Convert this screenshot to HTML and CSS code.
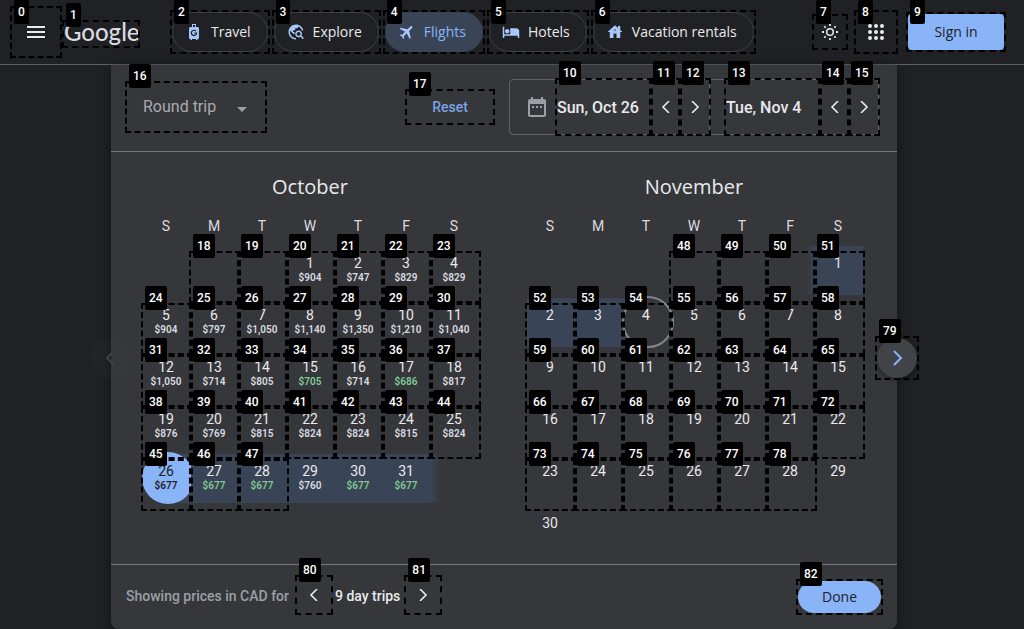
FILE: index.html
```html
<!DOCTYPE html>
<html lang="en">
<head>
<meta charset="utf-8">
<meta name="viewport" content="width=device-width, initial-scale=1">
<title>Google Flights</title>
<link rel="stylesheet" href="styles.css">
</head>
<body>
<header class="header">
  <div class="spot spot-menu">
    <button class="icon-button" aria-label="Main menu">
      <svg width="24" height="24" viewBox="0 0 24 24" fill="currentColor"><path d="M3 6h18v2H3zM3 11h18v2H3zM3 16h18v2H3z"/></svg>
    </button>
    <span class="mark"><span class="tag">0</span></span>
  </div>
  <div class="spot spot-logo">
    <a class="logo" href="#">Google</a>
    <span class="mark"><span class="tag">1</span></span>
  </div>
  <nav class="nav">
    <div class="spot spot-chip">
      <a class="chip" href="#"><svg class="chip-icon" viewBox="0 0 18 18"><path fill="currentColor" d="M7 1h4v3h1.500a1.500 1.500 0 0 1 1.500 1.500v9a1.500 1.500 0 0 1-1.500 1.500v1h-1.500v-1H7v1H5.500v-1A1.500 1.500 0 0 1 4 14.500v-9A1.500 1.500 0 0 1 5.500 4H7zm1 1v2h2V2z"/><path fill="none" stroke="#202124" stroke-width="1.200" d="M11 8.200A2.600 2.600 0 1 0 11.600 10H9.200"/></svg>Travel</a>
      <span class="mark"><span class="tag">2</span></span>
    </div>
    <div class="spot spot-chip">
      <a class="chip" href="#"><svg class="chip-icon" viewBox="0 0 24 24"><path fill="currentColor" d="M19.300 16.900c.4-.7.7-1.500.7-2.400 0-2.500-2-4.500-4.500-4.500S11 12 11 14.500s2 4.500 4.500 4.500c.9 0 1.700-.3 2.400-.7l3.200 3.200 1.400-1.400zm-3.800.1c-1.400 0-2.500-1.100-2.500-2.500s1.100-2.500 2.500-2.500 2.500 1.100 2.500 2.500-1.100 2.500-2.500 2.500zM12 20v2C6.480 22 2 17.520 2 12S6.480 2 12 2c4.840 0 8.870 3.440 9.800 8h-2.070c-.64-2.460-2.400-4.470-4.730-5.410V5c0 1.100-.9 2-2 2h-2v2c0 .55-.45 1-1 1H8v2h2v3H9l-4.790-4.790C4.080 10.790 4 11.380 4 12c0 4.410 3.590 8 8 8z"/></svg>Explore</a>
      <span class="mark"><span class="tag">3</span></span>
    </div>
    <div class="spot spot-chip">
      <a class="chip chip-active" href="#" aria-current="page"><svg class="chip-icon" viewBox="0 0 24 24"><path fill="currentColor" transform="rotate(45 12 12)" d="M21 16v-2l-8-5V3.500c0-.83-.67-1.500-1.500-1.500S10 2.670 10 3.500V9l-8 5v2l8-2.500V19l-2 1.500V22l3.500-1 3.500 1v-1.500L13 19v-5.500l8 2.500z"/></svg>Flights</a>
      <span class="mark"><span class="tag">4</span></span>
    </div>
    <div class="spot spot-chip">
      <a class="chip" href="#"><svg class="chip-icon" viewBox="0 0 24 24"><path fill="currentColor" d="M7 14c1.660 0 3-1.340 3-3S8.660 8 7 8s-3 1.340-3 3 1.340 3 3 3zm12-7h-8v8H3V5H1v15h2v-3h18v3h2v-9c0-2.210-1.790-4-4-4z"/></svg>Hotels</a>
      <span class="mark"><span class="tag">5</span></span>
    </div>
    <div class="spot spot-chip">
      <a class="chip" href="#"><svg class="chip-icon" viewBox="0 0 24 24"><path fill="currentColor" fill-rule="evenodd" d="M12 3l4 3.600V4h3v5.300l3 2.700h-3v8h-5v-6h-4v6H5v-8H2zm0 5.500a1.500 1.500 0 0 0-1.500 1.500h3a1.500 1.500 0 0 0-1.500-1.500z"/></svg>Vacation rentals</a>
      <span class="mark"><span class="tag">6</span></span>
    </div>
  </nav>
  <div class="actions">
    <div class="spot spot-theme">
      <button class="icon-button" aria-label="Change appearance">
        <svg width="18" height="18" viewBox="0 0 18 18" fill="none" stroke="currentColor" stroke-width="1.500"><circle cx="9" cy="9" r="3.300"/><path stroke-width="1.800" d="M9 1v2M9 15v2M1 9h2M15 9h2M3.300 3.300l1.400 1.400M13.300 13.300l1.400 1.400M3.300 14.700l1.400-1.400M13.300 4.700l1.400-1.400"/></svg>
      </button>
      <span class="mark"><span class="tag">7</span></span>
    </div>
    <div class="spot spot-apps">
      <button class="icon-button" aria-label="Google apps">
        <svg width="24" height="24" viewBox="0 0 24 24" fill="currentColor"><circle cx="6" cy="6" r="2"/><circle cx="12" cy="6" r="2"/><circle cx="18" cy="6" r="2"/><circle cx="6" cy="12" r="2"/><circle cx="12" cy="12" r="2"/><circle cx="18" cy="12" r="2"/><circle cx="6" cy="18" r="2"/><circle cx="12" cy="18" r="2"/><circle cx="18" cy="18" r="2"/></svg>
      </button>
      <span class="mark"><span class="tag">8</span></span>
    </div>
    <div class="spot spot-signin">
      <a class="signin" href="#">Sign in</a>
      <span class="mark"><span class="tag">9</span></span>
    </div>
  </div>
</header>

<main class="page">
  <section class="picker" aria-label="Choose dates">
    <div class="toolbar">
      <div class="spot trip">
        <select class="trip-select" aria-label="Trip type"><option>Round trip</option><option>One way</option></select>
        <svg class="trip-arrow" width="10" height="5" viewBox="0 0 10 5"><path fill="currentColor" d="M0 0h10L5 5z"/></svg>
        <span class="mark"><span class="tag">16</span></span>
      </div>
      <div class="toolbar-right">
        <div class="spot">
          <button class="reset">Reset</button>
          <span class="mark"><span class="tag">17</span></span>
        </div>
        <div class="dates">
          <svg class="dates-icon" width="18" height="20" viewBox="0 0 18 20"><rect x="1" y="3" width="16" height="16" rx="1" fill="none" stroke="currentColor" stroke-width="2"/><path fill="currentColor" d="M1 3h16v4H1zM3 0h2v3H3zM13 0h2v3h-2zM4 9h2v2H4zM8 9h2v2H8zM12 9h2v2h-2z"/></svg>
          <div class="date-group date-group-first">
            <div class="spot"><input class="date-input" type="text" value="Sun, Oct 26" aria-label="Departure"><span class="mark"><span class="tag">10</span></span></div>
            <div class="spot"><button class="step" aria-label="Earlier departure"><svg class="chevron" viewBox="0 0 12 12"><path d="M9 0L3 6l6 6"/></svg></button><span class="mark"><span class="tag">11</span></span></div>
            <div class="spot"><button class="step" aria-label="Later departure"><svg class="chevron" viewBox="0 0 12 12"><path d="M3 0l6 6-6 6"/></svg></button><span class="mark"><span class="tag">12</span></span></div>
          </div>
          <div class="date-group">
            <div class="spot"><input class="date-input" type="text" value="Tue, Nov 4" aria-label="Return"><span class="mark"><span class="tag">13</span></span></div>
            <div class="spot"><button class="step" aria-label="Earlier return"><svg class="chevron" viewBox="0 0 12 12"><path d="M9 0L3 6l6 6"/></svg></button><span class="mark"><span class="tag">14</span></span></div>
            <div class="spot"><button class="step" aria-label="Later return"><svg class="chevron" viewBox="0 0 12 12"><path d="M3 0l6 6-6 6"/></svg></button><span class="mark"><span class="tag">15</span></span></div>
          </div>
        </div>
      </div>
    </div>

    <div class="months" id="months"></div>

    <div class="footer">
      <span class="footer-note">Showing prices in CAD for</span>
      <div class="spot"><button class="length-step" aria-label="Shorter trip"><svg class="chevron" viewBox="0 0 12 12"><path d="M9 0L3 6l6 6"/></svg></button><span class="mark"><span class="tag">80</span></span></div>
      <span class="footer-length">9 day trips</span>
      <div class="spot"><button class="length-step" aria-label="Longer trip"><svg class="chevron" viewBox="0 0 12 12"><path d="M3 0l6 6-6 6"/></svg></button><span class="mark"><span class="tag">81</span></span></div>
      <div class="spot spot-done"><button class="done">Done</button><span class="mark"><span class="tag">82</span></span></div>
    </div>

    <button class="pager pager-prev" aria-label="Previous months" disabled><svg width="24" height="24" viewBox="0 0 24 24"><path d="M15 5l-7 7 7 7"/></svg></button>
    <div class="spot pager-next">
      <button class="pager" aria-label="Next months"><svg width="24" height="24" viewBox="0 0 24 24"><path d="M9 5l7 7-7 7"/></svg></button>
      <span class="mark"><span class="tag">79</span></span>
    </div>
  </section>
</main>
<script src="calendar.js"></script>
</body>
</html>
```
FILE: styles.css
```css
*, *::before, *::after { box-sizing: border-box; }

body {
  margin: 0;
  background: #202124;
  color: #e8eaed;
  font: 400 14px/16px Roboto, sans-serif;
}

button, select, input {
  margin: 0;
  padding: 0;
  border: 0;
  background: none;
  color: inherit;
  font: inherit;
}

button { cursor: pointer; }
a { color: inherit; text-decoration: none; }
svg { display: block; flex: none; }

/* Numbered outlines */
.spot { position: relative; flex: none; }

.mark {
  position: absolute;
  inset: -2px;
  z-index: 3;
  border: 2px dashed #000;
  pointer-events: none;
}

.tag {
  position: absolute;
  top: -19px;
  left: 2px;
  z-index: 4;
  padding: 4px;
  border-radius: 2px;
  background: #000;
  color: #fff;
  font: 500 12px/16px Roboto, sans-serif;
}

.spot-menu .tag { top: -8px; }
.spot-chip .tag, .spot-apps .tag { top: -12px; }
.spot-theme .tag { top: -16px; }
.spot-signin .tag { top: -14px; }

/* Header */
.header {
  display: flex;
  align-items: center;
  height: 65px;
  padding: 0 20px 0 12px;
  border-bottom: 1px solid #5f6368;
}

.icon-button {
  display: grid;
  place-items: center;
  width: 100%;
  height: 100%;
}

.spot-menu { width: 48px; height: 48px; }
.spot-logo { width: 74px; margin: 4px 0 0 4px; }

.logo {
  display: block;
  height: 24px;
  color: #dadce0;
  font: 500 24px/20px Lato, sans-serif;
}

.nav { display: flex; gap: 6px; margin-left: 34px; }

.chip {
  display: flex;
  align-items: center;
  gap: 8px;
  height: 40px;
  padding: 0 16px 0 12px;
  border: 1px solid #3c4043;
  border-radius: 20px;
  font: 500 14px/20px "Open Sans", sans-serif;
  white-space: nowrap;
}

.chip-icon { width: 18px; height: 18px; color: #a8c7fa; }
.chip-active { border-color: #394457; background: #394457; color: #8ab4f8; }

.actions { display: flex; align-items: center; margin-left: auto; }
.spot-theme { width: 32px; height: 32px; }
.spot-apps { width: 40px; height: 40px; margin: 0 12px 0 10px; }

.signin {
  display: block;
  width: 96px;
  border-radius: 4px;
  background: #8ab4f8;
  color: #202124;
  font: 500 14px/36px "Open Sans", sans-serif;
  text-align: center;
}

/* Date picker */
.page { padding: 0 127px 0 111px; }

.picker {
  position: relative;
  border-radius: 0 0 8px 8px;
  background: #36373a;
  box-shadow: 0 2px 12px rgba(0, 0, 0, 0.5);
}

.toolbar {
  display: flex;
  align-items: center;
  justify-content: space-between;
  height: 87px;
  padding: 0 18px 2px 16px;
  border-bottom: 1px solid #75777a;
}

.toolbar-right { display: flex; align-items: center; gap: 16px; }
.trip { width: 138px; }

.trip-select {
  width: 100%;
  height: 48px;
  padding: 0 16px;
  appearance: none;
  color: #a8abaf;
  font-size: 16px;
}

.trip-arrow { position: absolute; top: 24px; right: 18px; color: #9aa0a6; pointer-events: none; }

.reset { width: 86px; height: 32px; color: #7ba3e4; font-weight: 500; }

.dates {
  display: flex;
  align-items: center;
  height: 56px;
  padding-left: 18px;
  border: 1px solid #5f6368;
  border-radius: 4px;
}

.dates-icon { margin-right: 11px; color: #9aa0a6; }
.date-group { display: flex; }
.date-group-first { margin-right: 16px; border-right: 1px solid #5f6368; }

.date-input { display: block; width: 94px; height: 54px; font-size: 16px; font-weight: 500; }
.step { display: grid; place-items: center; width: 29px; height: 54px; }

.chevron {
  width: 12px;
  height: 12px;
  fill: none;
  stroke: currentColor;
  stroke-width: 1.6;
}

/* Months */
.months {
  display: flex;
  justify-content: space-between;
  padding: 23px 35px 1px 31px;
}

.month-title {
  margin: 0 0 19px;
  font: 500 20px/24px "Open Sans", sans-serif;
  text-align: center;
}

.weekdays, .days { display: grid; grid-template-columns: repeat(7, 48px); }
.weekdays { margin-bottom: 17px; color: #dadce0; text-align: center; }
.days { grid-auto-rows: 52px; }

.cell { position: relative; }
.cell .mark { inset: 0 -3px 0 -1px; }

.day {
  position: relative;
  z-index: 1;
  display: flex;
  flex-direction: column;
  align-items: center;
  gap: 1px;
  width: 100%;
  height: 100%;
  padding-top: 4px;
}

.price { color: #dadce0; font: 600 10px/12px Roboto, sans-serif; }
.price-low { color: #81c995; }

.cell-range::before, .cell-start::before, .cell-end::before {
  content: "";
  position: absolute;
  top: -5px;
  left: 1px;
  width: 48px;
  height: 49px;
  background: #394457;
}

.cell-start::before { left: 25px; width: 24px; }
.cell-end::before { width: 24px; }

.cell-fade-right::after, .cell-fade-left::after {
  content: "";
  position: absolute;
  top: -5px;
  left: 49px;
  width: 9px;
  height: 48px;
  background: linear-gradient(to right, #394457, #36373a);
}

.cell-fade-left::after { left: -8px; background: linear-gradient(to left, #394457, #36373a); }

.cell-start::after, .cell-end::after {
  content: "";
  position: absolute;
  top: -7px;
  left: 0;
  width: 52px;
  height: 52px;
  border-radius: 50%;
  background: #8ab4f8;
}

.cell-end::after { border: 2px solid #80868b; background: #36373a; }
.cell-start .day, .cell-start .price { color: #202124; }

/* Footer */
.footer {
  display: flex;
  align-items: flex-start;
  height: 65px;
  padding: 12px 16px 0 15px;
  border-top: 1px solid #75777a;
  line-height: 38px;
}

.footer-note { margin-right: 8px; color: #9aa0a6; font-weight: 500; }
.footer-length { margin: 0 6px 0 4px; font-weight: 500; }
.length-step { display: grid; place-items: center; width: 34px; height: 36px; }
.spot-done { margin: 4px 0 0 auto; }

.done {
  display: block;
  width: 83px;
  height: 32px;
  border-radius: 16px;
  background: #8ab4f8;
  color: #202124;
  font: 500 14px/32px "Open Sans", sans-serif;
}

/* Paging buttons over the picker's edges */
.pager {
  display: grid;
  place-items: center;
  width: 40px;
  height: 40px;
  border-radius: 50%;
  background: #424346;
  box-shadow: 0 1px 4px rgba(0, 0, 0, 0.5);
}

.pager path { fill: none; stroke: #8ab4f8; stroke-width: 2; }
.pager-prev { position: absolute; top: 273px; left: -20px; background: rgba(66, 67, 70, 0.1); box-shadow: none; }
.pager-prev path { stroke: #3b4350; }
.pager-next { position: absolute; top: 273px; right: -20px; }
```
FILE: calendar.js
```js
const months = [
  {
    name: "October",
    offset: 3,
    length: 31,
    firstMark: { cell: 1, label: 18 },
    prices: [904, 747, 829, 829, 904, 797, 1050, 1140, 1350, 1210, 1040, 1050, 714, 805, 705, 714,
      686, 817, 876, 769, 815, 824, 824, 815, 824, 677, 677, 677, 760, 677, 677],
    low: [15, 17, 27, 28, 30, 31],
    classes: { 26: "cell-start", 27: "cell-range", 28: "cell-range", 29: "cell-range",
      30: "cell-range", 31: "cell-range cell-fade-right" }
  },
  {
    name: "November",
    offset: 6,
    length: 30,
    firstMark: { cell: 3, label: 48 },
    prices: [],
    low: [],
    classes: { 1: "cell-range cell-fade-left", 2: "cell-range", 3: "cell-range", 4: "cell-end" }
  }
];

function renderCell(month, index) {
  const day = index - month.offset + 1;
  const price = month.prices[day - 1];
  const priceClass = month.low.includes(day) ? "price price-low" : "price";
  const priceHtml = price ? `<span class="${priceClass}">$${price.toLocaleString("en-US")}</span>` : "";
  const dayHtml = day > 0 ? `<button class="day"><span>${day}</span>${priceHtml}</button>` : "";
  const marked = index >= month.firstMark.cell && day <= 28;
  const label = month.firstMark.label + index - month.firstMark.cell;
  const markHtml = marked ? `<span class="mark"><span class="tag">${label}</span></span>` : "";
  return `<div class="cell ${month.classes[day] || ""}">${dayHtml}${markHtml}</div>`;
}

document.getElementById("months").innerHTML = months.map((month) => {
  const cells = Array.from({ length: month.offset + month.length }, (_, i) => renderCell(month, i));
  const weekdays = [..."SMTWTFS"].map((letter) => `<span>${letter}</span>`);
  return `<section class="month">
    <h2 class="month-title">${month.name}</h2>
    <div class="weekdays">${weekdays.join("")}</div>
    <div class="days">${cells.join("")}</div>
  </section>`;
}).join("");
```
